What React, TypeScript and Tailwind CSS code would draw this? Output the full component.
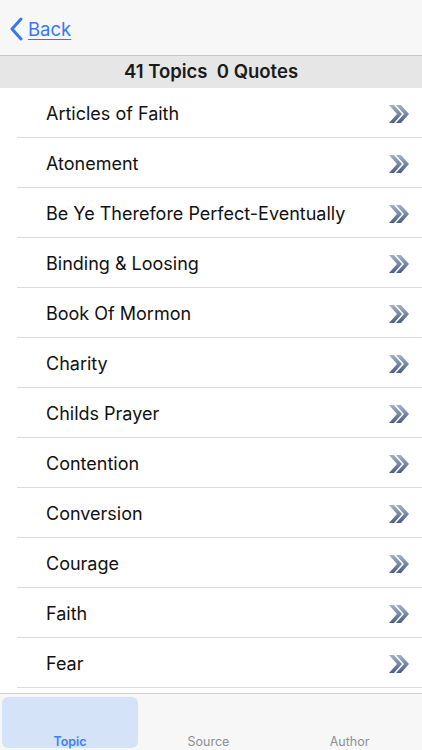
import React from 'react'

const TOPICS = [
  'Articles of Faith',
  'Atonement',
  'Be Ye Therefore Perfect-Eventually',
  'Binding & Loosing',
  'Book Of Mormon',
  'Charity',
  'Childs Prayer',
  'Contention',
  'Conversion',
  'Courage',
  'Faith',
  'Fear',
]

function DoubleChevron() {
  return (
    <svg width="22" height="20" viewBox="0 0 22 20" aria-hidden="true">
      <defs>
        <linearGradient id="chev" x1="0" y1="0" x2="0" y2="1">
          <stop offset="0" stopColor="#a3b2cc" />
          <stop offset="1" stopColor="#4a5e80" />
        </linearGradient>
      </defs>
      <path d="M1 1h5l8 9-8 9H1l8-9z" fill="url(#chev)" />
      <path d="M8 1h5l8 9-8 9H8l8-9z" fill="url(#chev)" />
    </svg>
  )
}

export default function App() {
  return (
    <div
      className="flex h-[750px] w-[422px] flex-col overflow-hidden bg-white"
      style={{ fontFamily: 'Inter, "Liberation Sans", sans-serif' }}
    >
      {/* Barre de navigation */}
      <div className="flex h-[56px] shrink-0 items-end border-b border-[#c8c8cc] bg-[#f7f7f7] pb-[14px] pl-[9px]">
        <div className="flex items-center gap-[5px] text-[#3478f6]">
          <svg width="14" height="24" viewBox="0 0 14 24" aria-hidden="true">
            <path d="M12 2L3 12l9 10" fill="none" stroke="currentColor" strokeWidth="3" strokeLinecap="round" strokeLinejoin="round" />
          </svg>
          <span className="text-[18.5px] leading-none underline underline-offset-[3px]">Back</span>
        </div>
      </div>

      {/* En-tête */}
      <div className="flex h-[32px] shrink-0 items-center justify-center bg-[#e6e6e6] text-[18.5px] font-semibold text-[#1a1a1a]">
        41 Topics&nbsp;&nbsp;0 Quotes
      </div>

      {/* Liste */}
      <div className="flex-1 overflow-hidden">
        {TOPICS.map((t) => (
          <div key={t} className="ml-[17px] flex h-[50px] items-center justify-between border-b border-[#dcdcdc] pl-[29px] pr-[12px] pt-[2px]">
            <span className="text-[18px] text-[#111]">{t}</span>
            <DoubleChevron />
          </div>
        ))}
      </div>

      {/* Barre d'onglets */}
      <div className="flex h-[57px] shrink-0 border-t border-[#d0d0d0] bg-[#f7f7f7] px-[2px] pb-[2px] pt-[3px]">
        <div className="flex w-[136px] items-end justify-center rounded-[6px] bg-[#d4e3f7] text-[12.5px] font-semibold leading-none text-[#3b82f6]">
          Topic
        </div>
        <div className="flex flex-1 items-end justify-center text-[12.5px] leading-none text-[#8e8e93]">Source</div>
        <div className="flex flex-1 items-end justify-center text-[12.5px] leading-none text-[#8e8e93]">Author</div>
      </div>
    </div>
  )
}
